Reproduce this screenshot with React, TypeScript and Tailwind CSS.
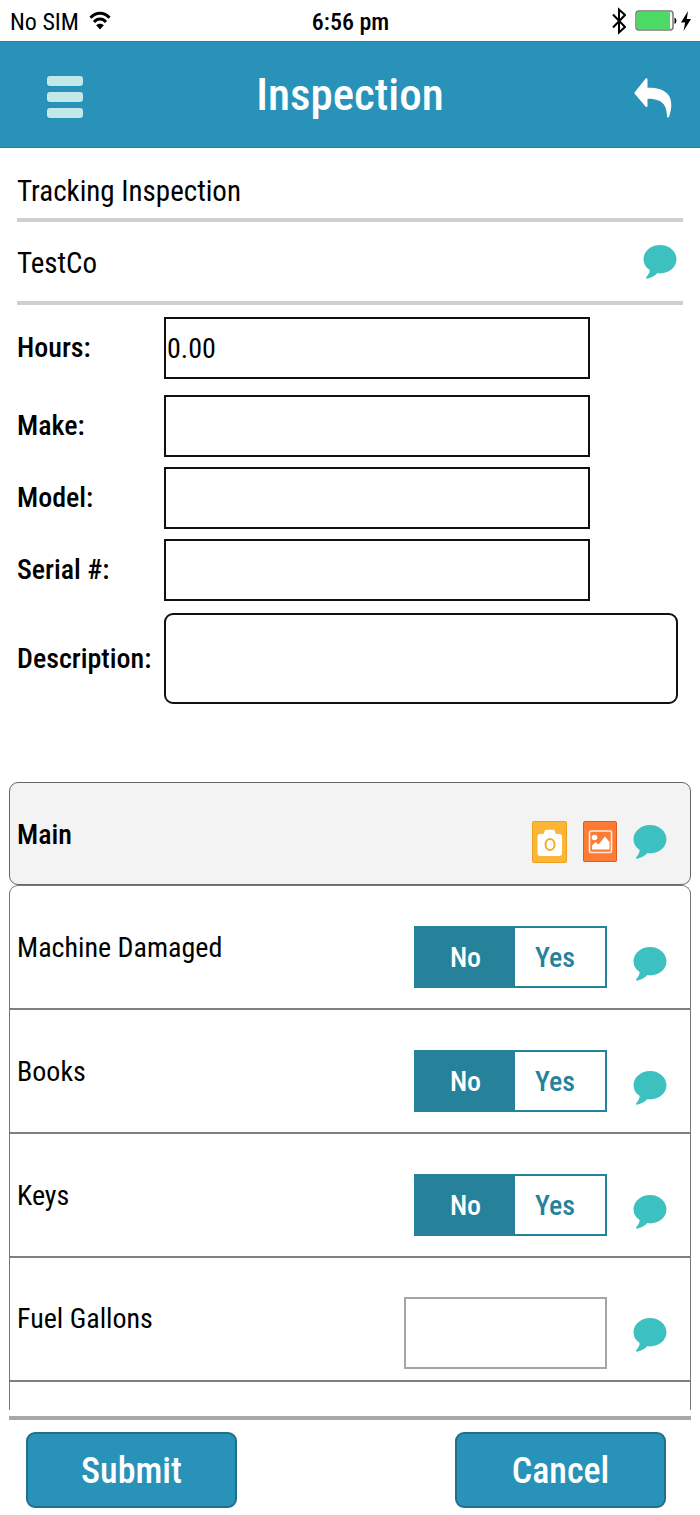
import { useState } from 'react';

function CommentIcon() {
  return (
    <svg viewBox="0 0 34 36" className="block h-[36px] w-[34px]" fill="#3dc0c0" aria-hidden="true">
      <path d="M17 1C7.900 1 .5 7.300 .5 15.300c0 4.400 2.200 7.900 6 10.500.6 2.600-1.400 5.200-3.300 7.500-.5.700 0 1.500.9 1.400 4.300-.6 7.800-3 10.400-5.600.9.200 1.700.3 2.500.3 9.100 0 16.500-6.100 16.500-14.100S26.100 1 17 1z" />
    </svg>
  );
}

function CommentButton() {
  return (
    <button type="button" aria-label="Add comment" className="cursor-pointer">
      <CommentIcon />
    </button>
  );
}

function StatusBar() {
  return (
    <div className="grid h-[41px] grid-cols-3 items-center pr-[9px] pl-[10px] text-[24px] leading-8">
      <div className="flex items-center gap-[10px] pt-[2px]">
        <span>No SIM</span>
        <svg viewBox="0 0 22 19" className="mb-[2px] h-[19px] w-[22px]" aria-hidden="true">
          <path d="M1.500 6.700C7 .6 15 .6 20.500 6.700" fill="none" stroke="#000" strokeWidth="3" />
          <path d="M5 11c3.500-3.900 8.500-3.900 12 0" fill="none" stroke="#000" strokeWidth="3" />
          <path d="M11 18.500l-3.800-4.300c2.100-2 5.500-2 7.600 0z" />
        </svg>
      </div>
      <div className="pt-[2px] text-center font-medium">6:56 pm</div>
      <div className="flex items-center justify-end gap-1">
        <svg viewBox="0 0 14 28" className="mr-[5px] h-[28px] w-[14px]" fill="none" stroke="#000" strokeWidth="2" aria-hidden="true">
          <path d="M1 7.500l12 12.500-6 5.500v-23L13 8 1 20.500" />
        </svg>
        <svg viewBox="0 0 42 21" className="h-[21px] w-[42px]" aria-hidden="true">
          <rect x="1" y="1" width="37" height="19" rx="3" fill="#fff" stroke="#777" strokeWidth="1.500" />
          <path d="M3 2h32v17H3a1.500 1.500 0 0 1-1.500-1.500v-14A1.500 1.500 0 0 1 3 2z" fill="#4cd964" />
          <path d="M39.500 7.500c2.500.5 2.500 6 0 6.500z" />
        </svg>
        <svg viewBox="0 0 10 20" className="h-[20px] w-[10px]" aria-hidden="true">
          <path d="M7 0L0 11.500h4.200L2.500 20 10 8H5.800z" />
        </svg>
      </div>
    </div>
  );
}

function Header() {
  return (
    <header className="grid h-[107px] grid-cols-[1fr_auto_1fr] items-center border-y border-[#2282a8] bg-[#2892b8] px-[28px]">
      <button type="button" aria-label="Menu" className="ml-[19px] flex cursor-pointer flex-col gap-[6px] justify-self-start pt-1">
        <span className="block h-[10px] w-[36px] rounded-[3px] bg-[#c2e9ea]" />
        <span className="block h-[10px] w-[36px] rounded-[3px] bg-[#c2e9ea]" />
        <span className="block h-[10px] w-[36px] rounded-[3px] bg-[#c2e9ea]" />
      </button>
      <h1 className="text-[45px] leading-[56px] font-medium text-white">Inspection</h1>
      <button type="button" aria-label="Back" className="cursor-pointer justify-self-end pt-[6px]">
        <svg viewBox="0 0 38 40" className="block h-[40px] w-[38px]" fill="#fff" aria-hidden="true">
          <path d="M.7 14.200L11.500.8c.8-.9 2-.5 2 .7v8.300C27 9.300 37.500 14 37.300 27c0 4.500-1 8-2.300 11.800-.5 1.200-1.900 1-1.900-.3C32.500 26.500 28.500 20.800 13.500 20.700v7c0 1.200-1.200 1.700-2 .7L.7 15.700c-.4-.5-.4-1 0-1.500z" />
        </svg>
      </button>
    </header>
  );
}

const fields = [
  { id: 'hours', label: 'Hours:', value: '0.00', gap: 'mb-[16px]' },
  { id: 'make', label: 'Make:', value: '', gap: 'mb-[10px]' },
  { id: 'model', label: 'Model:', value: '', gap: 'mb-[10px]' },
  { id: 'serial', label: 'Serial #:', value: '', gap: 'mb-[12px]' },
];

function DetailsForm() {
  return (
    <div className="px-[17px] pt-[12px]">
      {fields.map((field) => (
        <div key={field.id} className={`flex items-center ${field.gap}`}>
          <label htmlFor={field.id} className="w-[147px] shrink-0 font-medium">{field.label}</label>
          <input
            id={field.id}
            type="text"
            defaultValue={field.value}
            className="mr-[93px] h-[62px] min-w-0 flex-1 border-2 border-[#111] px-[1px] outline-none"
          />
        </div>
      ))}
      <div className="flex items-center">
        <label htmlFor="description" className="w-[147px] shrink-0 font-medium">Description:</label>
        <textarea
          id="description"
          className="mr-[5px] block h-[91px] min-w-0 flex-1 resize-none rounded-[9px] border-2 border-[#111] px-2 outline-none"
        />
      </div>
    </div>
  );
}

function YesNo({ label }: { label: string }) {
  const [value, setValue] = useState('No');
  const on = 'bg-[#26829b] text-white';
  const off = 'bg-white text-[#26829b]';

  return (
    <div role="group" aria-label={label} className="flex h-[62px] border-2 border-[#26829b] font-medium">
      <button
        type="button"
        aria-pressed={value === 'No'}
        onClick={() => setValue('No')}
        className={`w-[99px] cursor-pointer pt-[2px] ${value === 'No' ? on : off}`}
      >
        No
      </button>
      <button
        type="button"
        aria-pressed={value === 'Yes'}
        onClick={() => setValue('Yes')}
        className={`w-[90px] cursor-pointer pt-[2px] pr-[10px] ${value === 'Yes' ? on : off}`}
      >
        Yes
      </button>
    </div>
  );
}

const questions = ['Machine Damaged', 'Books', 'Keys'];

function Checklist() {
  return (
    <section className="mx-[9px] mt-[78px]">
      <div className="flex h-[103px] items-center rounded-[9px] border border-[#666] bg-[#f3f3f3] pr-[23px] pl-[7px]">
        <h2 className="flex-1 pt-[2px] font-medium">Main</h2>
        <div className="flex items-center gap-4 pt-[16px]">
          <button type="button" aria-label="Take photo" className="cursor-pointer">
            <svg viewBox="0 0 35 42" className="block h-[42px] w-[35px]" aria-hidden="true">
              <rect x=".5" y=".5" width="34" height="41" rx="1" fill="#fdb535" stroke="#eda01c" />
              <path d="M8 13h3.500l1.500-3.500c.2-.5.600-.8 1.200-.8h7c.6 0 1 .3 1.200.8L24 13h3.500c1.500 0 2.500 1 2.500 2.500v17c0 1.500-1 2.500-2.500 2.500H8c-1.500 0-2.500-1-2.500-2.500v-17C5.500 14 6.500 13 8 13z" fill="#fff" />
              <ellipse cx="18" cy="23.500" rx="4.500" ry="5.500" fill="#fff" stroke="#f5ab28" strokeWidth="2" />
            </svg>
          </button>
          <button type="button" aria-label="Choose picture" className="cursor-pointer">
            <svg viewBox="0 0 34 41" className="block h-[41px] w-[34px]" aria-hidden="true">
              <rect x=".5" y=".5" width="33" height="40" rx="1" fill="#ff7b33" stroke="#db5c1c" />
              <rect x="6.500" y="10" width="22" height="21.500" rx="1.500" fill="none" stroke="#ffe9dc" strokeWidth="1.700" />
              <circle cx="11.500" cy="16.500" r="2.800" fill="#fff" />
              <path d="M9 28.500v-4l3.500-3.500 3 2.500 6.500-8 4.500 5.500v7.500z" fill="#fff" />
            </svg>
          </button>
          <CommentButton />
        </div>
      </div>

      <div className="rounded-t-[9px] border border-b-0 border-[#777]">
        {questions.map((question) => (
          <div key={question} className="flex h-[124px] items-center border-b-2 border-[#808080] pr-[23px] pl-[7px]">
            <span className="flex-1 pt-[2px]">{question}</span>
            <div className="flex items-center gap-[26px] pt-[20px]">
              <YesNo label={question} />
              <div className="pt-[24px] pb-[2px]"><CommentButton /></div>
            </div>
          </div>
        ))}
        <div className="flex h-[124px] items-center border-b-2 border-[#808080] pr-[23px] pl-[7px]">
          <label htmlFor="fuel" className="flex-1">Fuel Gallons</label>
          <div className="flex items-center gap-[26px] pt-[28px]">
            <input id="fuel" type="text" className="h-[72px] w-[203px] border-2 border-[#a5a5a5] px-2 outline-none" />
            <div className="pt-[12px]"><CommentButton /></div>
          </div>
        </div>
        <div className="h-[28px]" />
      </div>
    </section>
  );
}

export default function App() {
  return (
    <div className="bg-white font-['Roboto_Condensed',Roboto,'Liberation_Sans',sans-serif] text-[28px] leading-[36px] text-black">
      <StatusBar />
      <Header />

      <main>
        <div className="mx-[17px] flex h-[74px] items-center border-b-4 border-[#cfcfcf] pt-[16px] text-[29px]">Tracking Inspection</div>
        <div className="mx-[17px] flex h-[83px] items-center justify-between border-b-4 border-[#cfcfcf] pr-[6px] text-[29px]">
          <span className="pt-[2px]">TestCo</span>
          <CommentButton />
        </div>
        <DetailsForm />
        <Checklist />
      </main>

      <footer className="mx-[9px] mt-[6px] flex justify-between border-t-4 border-[#a8a8a8] px-[17px] pt-[12px] pb-[7px] text-[36px] font-medium text-white">
        <button type="submit" className="h-[76px] w-[211px] cursor-pointer rounded-[9px] border-2 border-[#216f8c] bg-[#2892b8] pt-[2px]">Submit</button>
        <button type="button" className="mr-[8px] h-[76px] w-[211px] cursor-pointer rounded-[9px] border-2 border-[#216f8c] bg-[#2892b8] pt-[2px]">Cancel</button>
      </footer>
    </div>
  );
}
